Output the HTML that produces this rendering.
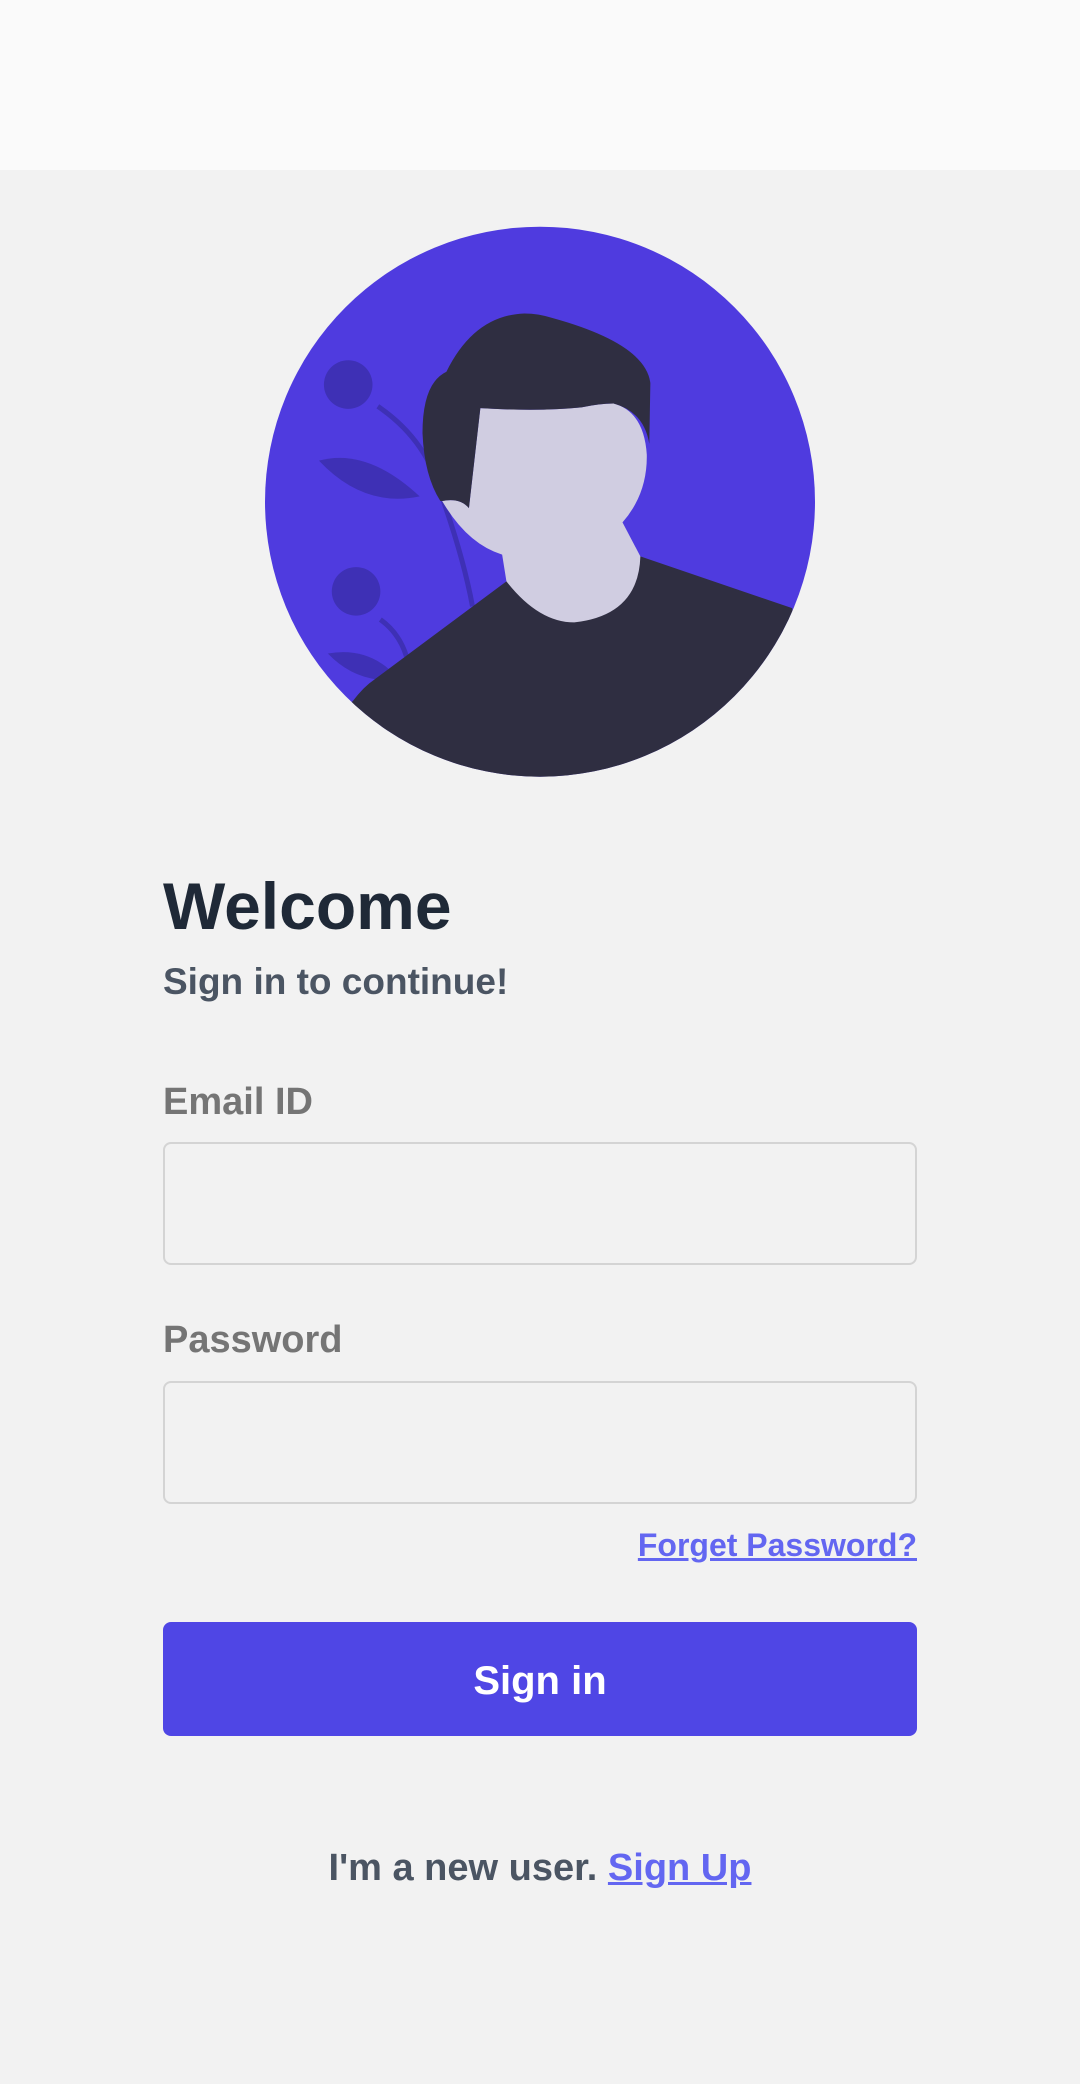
<!DOCTYPE html>
<html><head><meta charset="utf-8"><style>
*{margin:0;padding:0;box-sizing:border-box}
body{width:1080px;height:2084px;background:#f2f2f2;font-family:"Liberation Sans",sans-serif;font-weight:bold;position:relative;overflow:hidden}
.top{position:absolute;left:0;top:0;width:1080px;height:170px;background:#fafafa}
.abs{position:absolute;white-space:nowrap}
.inp{position:absolute;left:163px;width:754px;height:123px;border:2px solid #d4d4d4;border-radius:8px;background:#f2f2f2}
a{color:#6366f1;text-decoration:underline}
</style></head><body>
<div class="top"></div>
<svg class="abs" style="left:260px;top:226px" width="560" height="560" viewBox="0 0 1568 1568">
<defs><clipPath id="c"><circle cx="784" cy="772" r="770"/></clipPath></defs>
<g clip-path="url(#c)">
<rect width="1568" height="1568" fill="#4f3bdf"/>
<circle cx="247" cy="444" r="68" fill="#3e30b5"/>
<circle cx="269" cy="1023" r="68" fill="#3e30b5"/>
<path d="M165,657 Q300,620 447,757 Q290,790 165,657Z" fill="#3e30b5"/>
<path d="M190,1197 Q290,1180 360,1240 L330,1270 Q250,1260 190,1197Z" fill="#3e30b5"/>
<path d="M330,505 Q470,600 510,760 Q570,930 595,1065" stroke="#3e30b5" stroke-width="14" fill="none"/>
<path d="M337,1102 Q390,1140 410,1205" stroke="#3e30b5" stroke-width="14" fill="none"/>
<path d="M260,1330 Q290,1290 320,1270 L690,995 L1065,925 L1490,1070 L1568,1568 L0,1568Z" fill="#2f2e41"/>
<path d="M678,920 L690,995 Q780,1110 880,1110 Q1060,1090 1065,925 L1015,830 Q1085,750 1083,640 Q1075,520 990,497 Q950,497 900,508 Q780,520 617,510 L585,790 Q560,760 510,770 Q580,890 678,920Z" fill="#d0cde1"/>
<path d="M505,770 Q460,700 455,580 Q455,440 522,408 Q600,250 740,245 Q780,245 820,258 Q1080,330 1093,440 L1090,610 Q1075,520 990,497 Q950,497 900,508 Q780,520 617,510 L585,790 Q560,760 510,770Z" fill="#2f2e41"/>
</g></svg>
<div class="abs" style="left:163px;top:870px;font-size:66px;color:#1f2937;line-height:72px">Welcome</div>
<div class="abs" style="left:163px;top:960px;font-size:37px;color:#4b5563;line-height:44px">Sign in to continue!</div>
<div class="abs" style="left:163px;top:1080px;font-size:38px;color:#757575;line-height:44px">Email ID</div>
<div class="inp" style="top:1142px"></div>
<div class="abs" style="left:163px;top:1318px;font-size:38px;color:#757575;line-height:44px">Password</div>
<div class="inp" style="top:1381px"></div>
<div class="abs" style="right:163px;top:1527px;font-size:32px;line-height:36px"><a>Forget Password?</a></div>
<div class="abs" style="left:163px;top:1622px;width:754px;height:114px;background:#4f46e5;border-radius:8px;color:#fff;font-size:40px;line-height:118px;text-align:center">Sign in</div>
<div class="abs" style="left:0;width:1080px;top:1846px;font-size:38px;color:#4b5563;text-align:center;line-height:44px">I'm a new user. <a>Sign Up</a></div>
</body></html>
